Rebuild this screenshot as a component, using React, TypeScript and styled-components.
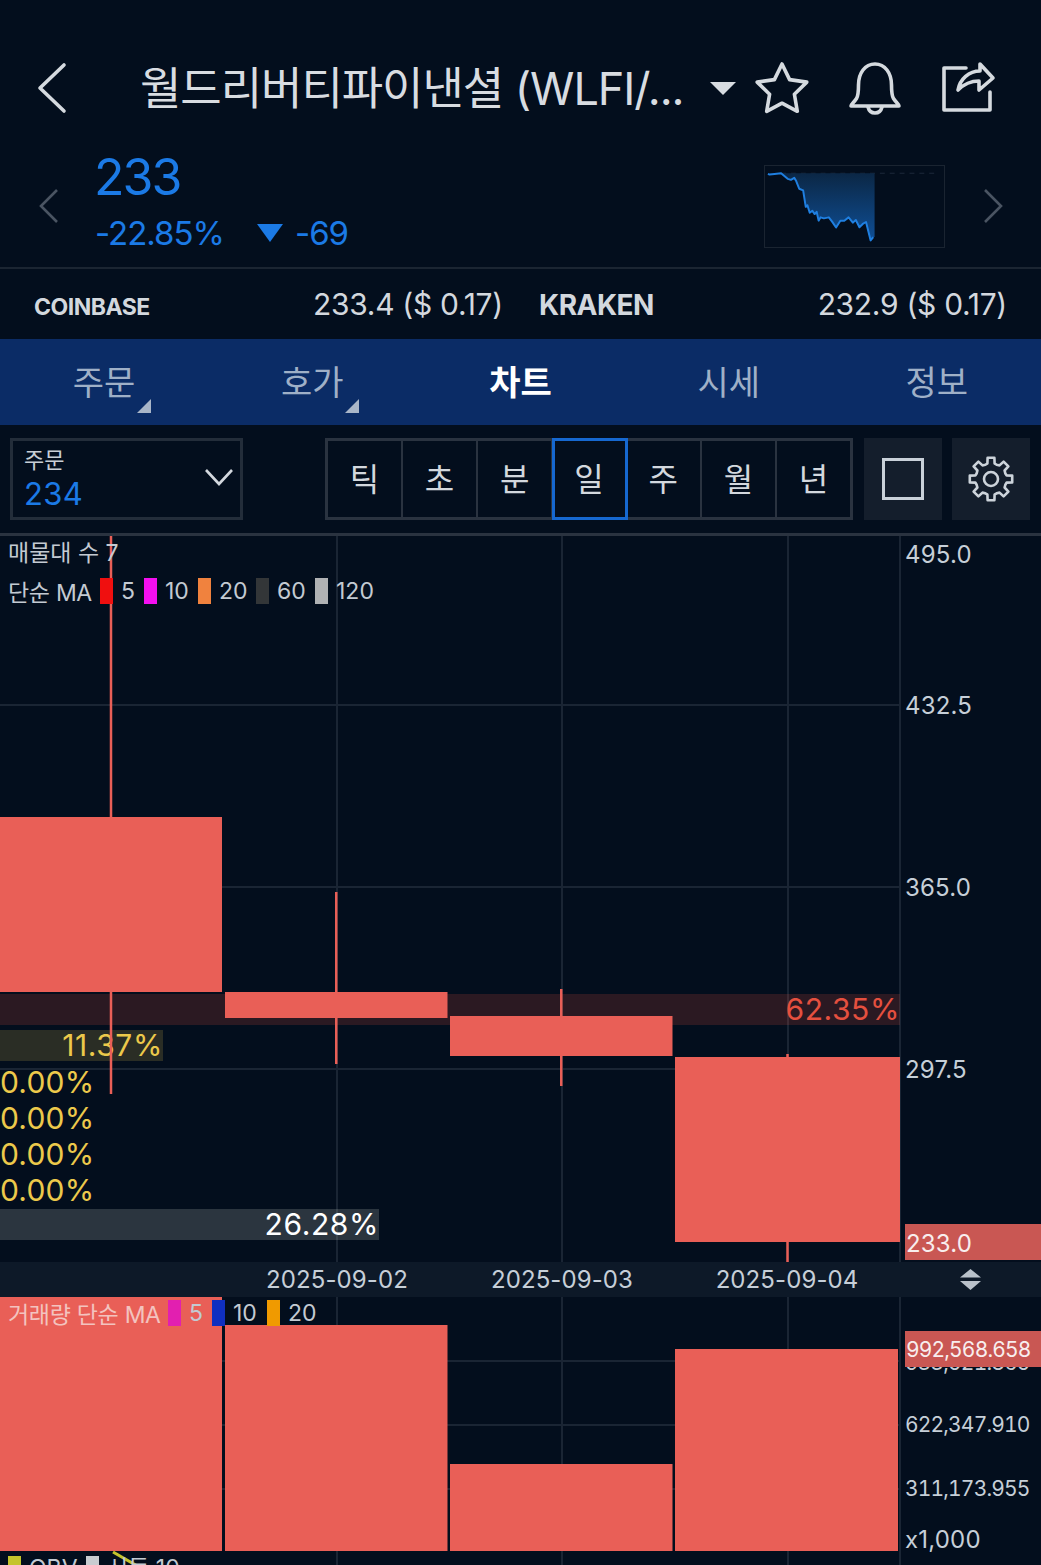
import styled, { createGlobalStyle } from 'styled-components'

const GlobalStyle = createGlobalStyle`
  html, body {
    margin: 0;
    padding: 0;
    background: #030e1d;
  }
  * {
    box-sizing: border-box;
  }
`

const FONT = `Inter, "Noto Sans CJK KR", sans-serif`
const CANDLE = '#e95f57'
const GRID = '#1a2534'

const Page = styled.div`
  width: 1041px;
  height: 1565px;
  overflow: hidden;
  display: flex;
  flex-direction: column;
  background: #030e1d;
  font-family: ${FONT};
  color: #d6dbe0;
`

const TitleBar = styled.header`
  height: 150px;
  padding: 26px 46px 0 36px;
  display: flex;
  align-items: center;
`

const IconButton = styled.div<{ $ml?: number; $mt?: number }>`
  display: flex;
  margin-left: ${({ $ml }) => $ml ?? 0}px;
  margin-top: ${({ $mt }) => $mt ?? 0}px;
  flex-shrink: 0;
`

const Title = styled.h1`
  margin: 0 0 6px 72px;
  width: 570px;
  flex-shrink: 0;
  font-size: 45px;
  font-weight: 400;
  letter-spacing: -1.05px;
  white-space: nowrap;
  color: #d8dce1;
`

const Caret = styled.div`
  width: 0;
  height: 0;
  flex-shrink: 0;
  border-left: 13px solid transparent;
  border-right: 13px solid transparent;
  border-top: 13px solid #d8dce1;
`

const PriceRow = styled.section`
  height: 119px;
  padding: 0 30px 0 38px;
  border-bottom: 2px solid #1b2532;
  display: flex;
  align-items: center;
`

const PriceBlock = styled.div`
  margin-left: 35px;
  width: 669px;
  flex-shrink: 0;
  margin-top: -16px;
  color: #1b7ae6;
`

const LastPrice = styled.div`
  margin-left: -1px;
  font-size: 50px;
  line-height: 56px;
  letter-spacing: -2px;
`

const ChangeRow = styled.div`
  margin-top: 8px;
  display: flex;
  align-items: center;
  font-size: 33px;
  line-height: 40px;
  letter-spacing: -1px;
`

const DownMark = styled.span`
  width: 0;
  height: 0;
  margin: 0 12px 0 33px;
  border-left: 13px solid transparent;
  border-right: 13px solid transparent;
  border-top: 18px solid #1b7ae6;
`

const Spark = styled.div`
  width: 181px;
  height: 83px;
  margin-top: -4px;
  border: 1px solid #1a2431;
  flex-shrink: 0;
  display: flex;
`

const ExchangeRow = styled.section`
  height: 70px;
  padding: 0 34px;
  display: flex;
  align-items: center;
`

const ExchangeName = styled.strong<{ $size: number; $w: number; $mt: number }>`
  width: ${({ $w }) => $w}px;
  margin-top: ${({ $mt }) => $mt}px;
  font-size: ${({ $size }) => $size}px;
  font-weight: 700;
  letter-spacing: -0.5px;
  color: #d3d8de;
`

const ExchangeQuote = styled.span<{ $w: number }>`
  width: ${({ $w }) => $w}px;
  font-size: 30px;
  letter-spacing: -0.3px;
  color: #d3d8de;
  text-align: ${({ $w }) => ($w > 300 ? 'right' : 'left')};
`

const Tabs = styled.nav`
  height: 86px;
  display: grid;
  grid-template-columns: repeat(5, 208.2px);
  background: #0b2c66;
`

const Tab = styled.div<{ $active?: boolean; $corner?: boolean }>`
  position: relative;
  display: flex;
  align-items: center;
  justify-content: center;
  padding-bottom: 4px;
  font-size: 34px;
  font-weight: ${({ $active }) => ($active ? 700 : 400)};
  color: ${({ $active }) => ($active ? '#ffffff' : '#9fb0c7')};

  &::after {
    content: ${({ $corner }) => ($corner ? '""' : 'none')};
    position: absolute;
    right: 57px;
    bottom: 12px;
    border-left: 14px solid transparent;
    border-bottom: 14px solid #a9b6c8;
  }
`

const Toolbar = styled.section`
  height: 111px;
  padding: 13px 11px 0 10px;
  border-bottom: 3px solid #2a3340;
  display: flex;
  align-items: flex-start;
`

const OrderSelect = styled.div`
  position: relative;
  width: 233px;
  height: 82px;
  padding: 6px 11px;
  border: 3px solid #232d3a;
`

const OrderLabel = styled.div`
  font-size: 22px;
  line-height: 27px;
  color: #c8ced6;
`

const OrderValue = styled.div`
  margin-top: 2px;
  font-size: 31px;
  line-height: 36px;
  letter-spacing: 0.4px;
  color: #1b7ae6;
`

const ChevronSlot = styled.div`
  position: absolute;
  right: 6px;
  top: 26px;
  display: flex;
`

const Segments = styled.div`
  margin-left: 82px;
  width: 529px;
  height: 82px;
  display: flex;
  border: 3px solid #2a3340;
`

const Segment = styled.div<{ $active?: boolean }>`
  flex: 1;
  margin: ${({ $active }) => ($active ? '-3px -1px' : '0')};
  z-index: ${({ $active }) => ($active ? 1 : 0)};
  display: flex;
  align-items: center;
  justify-content: center;
  padding-bottom: 4px;
  border-right: 2px solid #2a3340;
  outline: ${({ $active }) => ($active ? '3px solid #1668d0' : 'none')};
  outline-offset: -3px;
  font-size: 32px;
  color: #d3d8de;

  &:last-child {
    border-right: none;
  }
`

const ToolButton = styled.div<{ $ml: number }>`
  width: 78px;
  height: 82px;
  margin-left: ${({ $ml }) => $ml}px;
  background: #141e2c;
  display: flex;
  align-items: center;
  justify-content: center;
  color: #ccd3da;
`

const SquareIcon = styled.div`
  width: 42px;
  height: 42px;
  border: 3px solid #c9d1d9;
`

const Pane = styled.section<{ $h: number }>`
  position: relative;
  height: ${({ $h }) => $h}px;
  flex-shrink: 0;
  overflow: hidden;
`

const PlotLayer = styled.svg`
  position: absolute;
  inset: 0;
  display: block;
`

const Legend = styled.div<{ $top: number }>`
  position: absolute;
  left: 8px;
  top: ${({ $top }) => $top}px;
  height: 28px;
  display: flex;
  align-items: center;
  font-size: 23px;
  white-space: nowrap;
  color: #c3cad2;
`

const LegendTitle = styled.span<{ $w?: number; $tint?: string }>`
  display: inline-block;
  width: ${({ $w }) => ($w ? `${$w}px` : 'auto')};
  letter-spacing: -0.3px;
  color: ${({ $tint }) => $tint ?? 'inherit'};
`

const Swatch = styled.i<{ $color: string; $h?: number }>`
  width: 13px;
  height: ${({ $h }) => $h ?? 26}px;
  flex-shrink: 0;
  background: ${({ $color }) => $color};
`

const SwatchLabel = styled.span<{ $w: number }>`
  width: ${({ $w }) => $w}px;
  padding-left: 8px;
`

const ProfileBar = styled.div<{ $top: number; $w: number; $bg: string; $color: string }>`
  position: absolute;
  left: 0;
  top: ${({ $top }) => $top}px;
  width: ${({ $w }) => $w}px;
  height: 31px;
  display: flex;
  align-items: center;
  justify-content: flex-end;
  background: ${({ $bg }) => $bg};
  color: ${({ $color }) => $color};
  font-size: 30px;
  letter-spacing: 0.6px;
  line-height: 31px;
`

const ZeroRows = styled.div`
  position: absolute;
  left: 0;
  top: 528px;
  color: #ecc94b;
  font-size: 30px;
  line-height: 36px;
  letter-spacing: 0.2px;
`

const AxisLabel = styled.div<{ $y: number; $tight?: boolean }>`
  position: absolute;
  left: 905px;
  top: ${({ $y }) => $y - 14}px;
  line-height: 30px;
  font-size: ${({ $tight }) => ($tight ? 21 : 24)}px;
  font-variant-numeric: ${({ $tight }) => ($tight ? 'tabular-nums' : 'normal')};
  letter-spacing: ${({ $tight }) => ($tight ? -0.85 : 0.2)}px;
  white-space: nowrap;
  color: #c6cfd8;
`

const PriceTag = styled.div<{ $y: number; $h: number; $tight?: boolean }>`
  position: absolute;
  left: 905px;
  right: 0;
  top: ${({ $y }) => $y}px;
  height: ${({ $h }) => $h}px;
  padding: ${({ $tight }) => ($tight ? 4 : 5)}px 0 0 1px;
  background: #c95753;
  color: #f8eeee;
  font-size: ${({ $tight }) => ($tight ? 21 : 24)}px;
  font-variant-numeric: ${({ $tight }) => ($tight ? 'tabular-nums' : 'normal')};
  line-height: 30px;
  letter-spacing: ${({ $tight }) => ($tight ? -0.85 : 0.2)}px;
`

const DateBar = styled.div`
  position: relative;
  height: 35px;
  flex-shrink: 0;
  background: #0d1928;
`

const DateLabel = styled.span<{ $x: number }>`
  position: absolute;
  left: ${({ $x }) => $x}px;
  top: 3px;
  transform: translateX(-50%);
  font-size: 24px;
  line-height: 30px;
  letter-spacing: 0.1px;
  color: #c6cfd8;
`

const ScaleHandle = styled.svg`
  position: absolute;
  left: 960px;
  top: 7px;
`

const OBVLegend = styled.div`
  position: absolute;
  left: 8px;
  top: 259px;
  display: flex;
  align-items: flex-start;
  font-size: 23px;
  line-height: 24px;
  white-space: nowrap;
  color: #c3cad2;
`

type Candle = { x: number; w: number; top: number; bottom: number; wickTop: number; wickBottom: number }

const candles: Candle[] = [
  { x: 0, w: 222, top: 817, bottom: 992, wickTop: 536, wickBottom: 1094 },
  { x: 225, w: 222.5, top: 992, bottom: 1018, wickTop: 892, wickBottom: 1064 },
  { x: 450, w: 222.5, top: 1016, bottom: 1056, wickTop: 989, wickBottom: 1086 },
  { x: 675, w: 225, top: 1057, bottom: 1242, wickTop: 1054, wickBottom: 1262 },
]

const volumes = [
  { x: 0, w: 222, top: 1297 },
  { x: 225, w: 222.5, top: 1325 },
  { x: 450, w: 222.5, top: 1464 },
  { x: 675, w: 223, top: 1349 },
]

const gridX = [337, 562, 788, 900]
const priceGridY = [705, 887, 1069]
const volumeGridY = [1361, 1425, 1489]

const tabs = ['주문', '호가', '차트', '시세', '정보']
const periods = ['틱', '초', '분', '일', '주', '월', '년']
const dates = [
  { x: 337, label: '2025-09-02' },
  { x: 562, label: '2025-09-03' },
  { x: 787, label: '2025-09-04' },
]

const sparkPoints =
  '80,70 85,72 100,70 120,68 140,85 150,88 160,82 165,90 175,115 187,120 195,170 200,165 207,188 215,182 222,192 228,185 234,212 240,202 250,205 265,202 275,215 287,233 300,212 312,212 325,202 338,218 347,210 358,232 368,222 378,216 392,272 400,262'

// 8 blocky teeth, same shape as the app's settings cog
const gearPath = (() => {
  const cx = 26
  const cy = 26
  const pt = (r: number, deg: number) => {
    const a = (deg * Math.PI) / 180
    return `${(cx + r * Math.cos(a)).toFixed(1)} ${(cy + r * Math.sin(a)).toFixed(1)}`
  }
  const parts: string[] = []
  for (let i = 0; i < 8; i++) {
    const c = i * 45 - 90
    parts.push(`${i === 0 ? 'M' : 'L'}${pt(16, c - 13)}`)
    parts.push(`L${pt(21.5, c - 9)}`)
    parts.push(`L${pt(21.5, c + 9)}`)
    parts.push(`L${pt(16, c + 13)}`)
    parts.push(`Q${pt(15, c + 22.5)} ${pt(16, c + 32)}`)
  }
  return parts.join(' ') + 'Z'
})()

function TopIcons() {
  const stroke = { fill: 'none', stroke: '#d5dadf', strokeWidth: 3.6, strokeLinejoin: 'round' as const, strokeLinecap: 'round' as const }
  return (
    <>
      <IconButton $ml={19}>
        <svg width="54" height="54" viewBox="0 0 54 54">
          <path {...stroke} d="M27 3l7.600 15.600 17.200 2.500-12.400 12.100 2.900 17.100L27 42.200l-15.300 8.100 2.900-17.100L2.200 21.100l17.200-2.500z" />
        </svg>
      </IconButton>
      <IconButton $ml={39}>
        <svg width="54" height="54" viewBox="0 0 54 54">
          <path {...stroke} d="M3 45c0-2 3-3.500 5.500-7.500 2-3.200 2-7 2-13.500C10.500 12 17 3 27 3s16.500 9 16.500 21c0 6.500 0 10.300 2 13.500C48 41.500 51 43 51 45z" />
          <path {...stroke} d="M20 46c1 4 3.500 6 7 6s6-2 7-6" />
        </svg>
      </IconButton>
      <IconButton $ml={40}>
        <svg width="54" height="54" viewBox="0 0 54 54">
          <path {...stroke} d="M24 7H2v42h46V31" />
          <path {...stroke} d="M16 29C18 18 27 10 38 10V3l13 14-14 12v-9c-9 0-15 3-21 9z" />
        </svg>
      </IconButton>
    </>
  )
}

export default function App() {
  return (
    <Page>
      <GlobalStyle />

      <TitleBar>
        <IconButton>
          <svg width="32" height="52" viewBox="0 0 32 52">
            <path d="M28 3L4 26l24 23" fill="none" stroke="#d5dadf" strokeWidth="3.6" strokeLinecap="round" strokeLinejoin="round" />
          </svg>
        </IconButton>
        <Title>월드리버티파이낸셜 (WLFI/...</Title>
        <Caret />
        <TopIcons />
      </TitleBar>

      <PriceRow>
        <IconButton $mt={-6}>
          <svg width="22" height="36" viewBox="0 0 22 36">
            <path d="M19 2L3 18l16 16" fill="none" stroke="#4a5462" strokeWidth="2.6" />
          </svg>
        </IconButton>
        <PriceBlock>
          <LastPrice>233</LastPrice>
          <ChangeRow>
            -22.85%
            <DownMark />
            -69
          </ChangeRow>
        </PriceBlock>
        <Spark>
          <svg width="179" height="81" viewBox="73 46 540 246">
            <defs>
              <linearGradient id="sparkFill" x1="0" y1="0" x2="0" y2="1">
                <stop offset="0" stopColor="#0b2745" />
                <stop offset="1" stopColor="#0f4f96" />
              </linearGradient>
            </defs>
            <line x1="120" y1="68" x2="600" y2="68" stroke="#1d2a3a" strokeWidth="3" strokeDasharray="15 15" />
            <polygon points={`${sparkPoints} 404,262 404,68 120,68`} fill="url(#sparkFill)" />
            <polyline points={sparkPoints} fill="none" stroke="#1f7fe0" strokeWidth="6" strokeLinejoin="round" />
          </svg>
        </Spark>
        <IconButton $ml={37} $mt={-6}>
          <svg width="22" height="36" viewBox="0 0 22 36">
            <path d="M3 2l16 16L3 34" fill="none" stroke="#4a5462" strokeWidth="2.6" />
          </svg>
        </IconButton>
      </PriceRow>

      <ExchangeRow>
        <ExchangeName $size={23} $w={279} $mt={6}>COINBASE</ExchangeName>
        <ExchangeQuote $w={226}>233.4 ($ 0.17)</ExchangeQuote>
        <ExchangeName $size={28} $w={130} $mt={2}>KRAKEN</ExchangeName>
        <ExchangeQuote $w={338}>232.9 ($ 0.17)</ExchangeQuote>
      </ExchangeRow>

      <Tabs>
        {tabs.map((tab, i) => (
          <Tab key={tab} $active={i === 2} $corner={i < 2}>
            {tab}
          </Tab>
        ))}
      </Tabs>

      <Toolbar>
        <OrderSelect>
          <OrderLabel>주문</OrderLabel>
          <OrderValue>234</OrderValue>
          <ChevronSlot>
            <svg width="30" height="20" viewBox="0 0 30 20">
              <path d="M2 3l13 14L28 3" fill="none" stroke="#d3d8de" strokeWidth="2.6" />
            </svg>
          </ChevronSlot>
        </OrderSelect>
        <Segments>
          {periods.map((p) => (
            <Segment key={p} $active={p === '일'}>
              {p}
            </Segment>
          ))}
        </Segments>
        <ToolButton $ml={11}>
          <SquareIcon />
        </ToolButton>
        <ToolButton $ml={10}>
          <svg width="52" height="52" viewBox="0 0 52 52" fill="none" stroke="#ccd3da" strokeWidth="2.6" strokeLinejoin="round">
            <path d={gearPath} />
            <circle cx="26" cy="26" r="7" />
          </svg>
        </ToolButton>
      </Toolbar>

      <Pane $h={726}>
        <PlotLayer width="1041" height="726" viewBox="0 536 1041 726">
          {gridX.map((x) => (
            <line key={x} x1={x} y1="536" x2={x} y2="1262" stroke={GRID} strokeWidth="2" />
          ))}
          {priceGridY.map((y) => (
            <line key={y} x1="0" y1={y} x2="900" y2={y} stroke={GRID} strokeWidth="2" />
          ))}
        </PlotLayer>

        <ProfileBar $top={458} $w={900} $bg="rgba(229, 80, 63, 0.18)" $color="#e5503f">62.35%</ProfileBar>
        <ProfileBar $top={494} $w={163} $bg="rgba(236, 201, 75, 0.17)" $color="#ecc94b">11.37%</ProfileBar>
        <ZeroRows>
          <div>0.00%</div>
          <div>0.00%</div>
          <div>0.00%</div>
          <div>0.00%</div>
        </ZeroRows>
        <ProfileBar $top={673} $w={379} $bg="rgba(170, 180, 170, 0.24)" $color="#ffffff">26.28%</ProfileBar>

        <PlotLayer width="1041" height="726" viewBox="0 536 1041 726">
          {candles.map((c) => (
            <g key={c.x} fill={CANDLE}>
              <rect x={c.x + c.w / 2 - 1.25} y={c.wickTop} width="2.5" height={c.wickBottom - c.wickTop} />
              <rect x={c.x} y={c.top} width={c.w} height={c.bottom - c.top} />
            </g>
          ))}
        </PlotLayer>

        <Legend $top={1}>매물대 수 7</Legend>
        <Legend $top={41}>
          <LegendTitle $w={92}>단순 MA</LegendTitle>
          <Swatch $color="#f00f0f" />
          <SwatchLabel $w={31}>5</SwatchLabel>
          <Swatch $color="#f50ff0" />
          <SwatchLabel $w={41}>10</SwatchLabel>
          <Swatch $color="#f0823e" />
          <SwatchLabel $w={45}>20</SwatchLabel>
          <Swatch $color="#333638" />
          <SwatchLabel $w={46}>60</SwatchLabel>
          <Swatch $color="#b0b2b4" />
          <SwatchLabel $w={50}>120</SwatchLabel>
        </Legend>

        <AxisLabel $y={18}>495.0</AxisLabel>
        <AxisLabel $y={169}>432.5</AxisLabel>
        <AxisLabel $y={351}>365.0</AxisLabel>
        <AxisLabel $y={533}>297.5</AxisLabel>
        <PriceTag $y={688} $h={36}>233.0</PriceTag>
      </Pane>

      <DateBar>
        {dates.map((d) => (
          <DateLabel key={d.x} $x={d.x}>{d.label}</DateLabel>
        ))}
        <ScaleHandle width="21" height="21" viewBox="0 0 21 21">
          <path d="M10.500 0L21 8.500H0z M0 12h21L10.500 21z" fill="#b9c1ca" />
        </ScaleHandle>
      </DateBar>

      <Pane $h={268}>
        <PlotLayer width="1041" height="268" viewBox="0 1297 1041 268">
          {gridX.map((x) => (
            <line key={x} x1={x} y1="1297" x2={x} y2="1565" stroke={GRID} strokeWidth="2" />
          ))}
          {volumeGridY.map((y) => (
            <line key={y} x1="0" y1={y} x2="900" y2={y} stroke={GRID} strokeWidth="2" />
          ))}
          {volumes.map((v) => (
            <rect key={v.x} x={v.x} y={v.top} width={v.w} height={1551 - v.top} fill={CANDLE} />
          ))}
          <line x1="113" y1="1552" x2="146" y2="1571" stroke="#c4c42c" strokeWidth="3" />
        </PlotLayer>

        <Legend $top={2}>
          <LegendTitle $w={160} $tint="#f3c3bf">거래량 단순 MA</LegendTitle>
          <Swatch $color="#e21fb0" />
          <SwatchLabel $w={31}>5</SwatchLabel>
          <Swatch $color="#0f2fc0" />
          <SwatchLabel $w={42}>10</SwatchLabel>
          <Swatch $color="#f09a00" />
          <SwatchLabel $w={40}>20</SwatchLabel>
        </Legend>

        <AxisLabel $y={65} $tight>933,521.865</AxisLabel>
        <PriceTag $y={34} $h={36} $tight>992,568.658</PriceTag>
        <AxisLabel $y={127} $tight>622,347.910</AxisLabel>
        <AxisLabel $y={191} $tight>311,173.955</AxisLabel>
        <AxisLabel $y={242}>x1,000</AxisLabel>

        <OBVLegend>
          <Swatch $color="#c4c42c" $h={20} />
          <SwatchLabel $w={65}>OBV</SwatchLabel>
          <Swatch $color="#c8ccd0" $h={20} />
          <SwatchLabel $w={100}>시동 10</SwatchLabel>
        </OBVLegend>
      </Pane>
    </Page>
  )
}
